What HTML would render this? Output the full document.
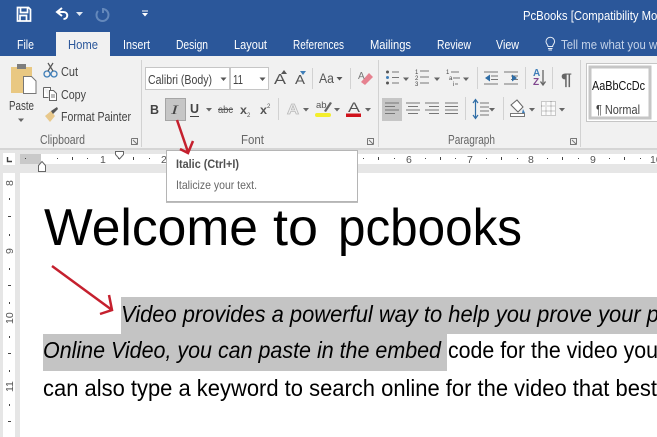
<!DOCTYPE html>
<html><head><meta charset="utf-8"><style>
html,body{margin:0;padding:0;background:#fff;overflow:hidden;width:657px;height:437px}
svg{display:block}
text{font-family:"Liberation Sans",sans-serif}
.t{fill:#fff;font-size:13px}
.r{fill:#444;font-size:13px}
.g{fill:#666;font-size:12.5px}
.n{fill:#555;font-size:10.5px}
</style></head><body>
<svg width="657" height="437" viewBox="0 0 657 437" xmlns="http://www.w3.org/2000/svg">
<rect width="657" height="437" fill="#fff"/>
<!-- title bar -->
<rect width="657" height="56" fill="#2b579a"/>
<rect x="56" y="32" width="54" height="24" fill="#f1f1f1"/>
<path d="M17.500 7.500h11l2 2v11.500h-13zM20.500 8v4.500h7V8M20 21v-5.500h6.500V21" fill="none" stroke="#fff" stroke-width="1.700"/>
<path d="M62 8l-5 4 5 4M57.500 12h6c5 0 5 7 0 7" fill="none" stroke="#fff" stroke-width="2"/>
<path d="M76 12h7l-3.500 4z" fill="#dfe7f2"/>
<path d="M102 9a6 6 0 1 1-4 2M103 8v5" fill="none" stroke="#6488bb" stroke-width="2"/>
<path d="M142 10.500h6v1h-6zM142 13h6l-3 3.500z" fill="#fff"/>
<text class="t" x="523" y="20" textLength="150" lengthAdjust="spacingAndGlyphs">PcBooks [Compatibility Mode]</text>
<text class="t" x="17" y="49" textLength="17" lengthAdjust="spacingAndGlyphs">File</text>
<text class="t" x="68" y="49" textLength="30" lengthAdjust="spacingAndGlyphs" style="fill:#2b579a">Home</text>
<text class="t" x="123" y="49" textLength="27" lengthAdjust="spacingAndGlyphs">Insert</text>
<text class="t" x="176" y="49" textLength="32" lengthAdjust="spacingAndGlyphs">Design</text>
<text class="t" x="234" y="49" textLength="33" lengthAdjust="spacingAndGlyphs">Layout</text>
<text class="t" x="293" y="49" textLength="51" lengthAdjust="spacingAndGlyphs">References</text>
<text class="t" x="370" y="49" textLength="41" lengthAdjust="spacingAndGlyphs">Mailings</text>
<text class="t" x="437" y="49" textLength="34" lengthAdjust="spacingAndGlyphs">Review</text>
<text class="t" x="496" y="49" textLength="23" lengthAdjust="spacingAndGlyphs">View</text>
<text class="t" x="561" y="49" textLength="112" lengthAdjust="spacingAndGlyphs" style="fill:#c3d2e8">Tell me what you want</text>
<path d="M548.500 50h3.500M548 48.500h4.500M548 46.500c0-2-2-2.500-2-5a4.300 4.300 0 0 1 8.600 0c0 2.500-2 3-2 5z" fill="none" stroke="#e4ebf5" stroke-width="1"/>
<!-- ribbon -->
<rect y="56" width="657" height="93" fill="#f1f1f1"/>
<rect y="148" width="657" height="2" fill="#d5d5d5"/>
<path d="M141.500 60v87M378.500 60v87M580.500 60v87" stroke="#d2d2d2"/>
<!-- clipboard -->
<rect x="11" y="67" width="21" height="26" fill="#e9c882"/>
<rect x="17" y="64" width="9" height="5" fill="#7d7d7d"/>
<path d="M23.500 76.500h8l4.500 4.500v12.500h-12.500z" fill="#fff" stroke="#777"/>
<text class="r" x="9" y="110" textLength="25" lengthAdjust="spacingAndGlyphs">Paste</text>
<path d="M18 118.500h6l-3 3.500z" fill="#666"/>
<circle cx="47" cy="74" r="3" fill="none" stroke="#3f7eb8" stroke-width="1.300"/><circle cx="54" cy="74" r="3" fill="none" stroke="#3f7eb8" stroke-width="1.300"/>
<path d="M48 71l5-8M53 71l-5-8" stroke="#555" stroke-width="1.200"/>
<text class="r" x="61" y="76" textLength="17" lengthAdjust="spacingAndGlyphs">Cut</text>
<path d="M43.500 87.500h7l0 3M43.500 87.500v10h5" fill="#fff" stroke="#666"/>
<path d="M49.500 90.500h4l3 3v7h-7z" fill="#fff" stroke="#666"/>
<path d="M51 95h4M51 97h4" stroke="#777"/>
<text class="r" x="61" y="99" textLength="25" lengthAdjust="spacingAndGlyphs">Copy</text>
<path d="M45 116l6-5 4 5-5 6z" fill="#e8c88b"/>
<path d="M51 111l6-4 1 2-5 5z" fill="#555"/>
<text class="r" x="61" y="121" textLength="70" lengthAdjust="spacingAndGlyphs">Format Painter</text>
<text class="g" x="40" y="144" textLength="45" lengthAdjust="spacingAndGlyphs">Clipboard</text>
<path d="M131.500 138.500h6v6M131.500 138.500v6h6M133 140l4 4" fill="none" stroke="#777"/>
<!-- font -->
<rect x="145.500" y="67.500" width="84" height="22" fill="#fff" stroke="#c6c6c6"/>
<rect x="230.500" y="67.500" width="38" height="22" fill="#fff" stroke="#c6c6c6"/>
<text class="r" x="148" y="84" textLength="64" lengthAdjust="spacingAndGlyphs">Calibri (Body)</text>
<text class="r" x="233" y="84" textLength="10" lengthAdjust="spacingAndGlyphs">11</text>
<path d="M220.500 77.500h6l-3 3.500zM259.500 77.500h6l-3 3.500z" fill="#555"/>
<text x="274" y="84" font-size="15" fill="#555" textLength="12" lengthAdjust="spacingAndGlyphs">A</text>
<path d="M281 74l3-4 3 4z" fill="#555"/>
<text x="295" y="84" font-size="12.500" fill="#555" textLength="10" lengthAdjust="spacingAndGlyphs">A</text>
<path d="M300 71h6l-3 4z" fill="#3f7eb8"/>
<path d="M312.500 68v21M350.500 68v21" stroke="#d2d2d2"/>
<text x="319" y="83" font-size="14" fill="#555" textLength="15" lengthAdjust="spacingAndGlyphs">Aa</text>
<path d="M336.500 77h6l-3 3.500z" fill="#555"/>
<path d="M361 82l8-9 4 4-8 8z" fill="#e6818f"/>
<text x="358" y="79" font-size="10" fill="#777">A</text>
<rect x="165.500" y="98.500" width="20" height="22" fill="#c6c6c6" stroke="#a5a5a5"/>
<text x="150" y="114" font-size="12.500" font-weight="bold" fill="#444" textLength="9" lengthAdjust="spacingAndGlyphs">B</text>
<text x="171" y="114" font-size="13" font-style="italic" style="font-family:'Liberation Serif',serif" fill="#444" textLength="7" lengthAdjust="spacingAndGlyphs">I</text>
<text x="190" y="113" font-size="12.500" font-weight="bold" fill="#444" textLength="9" lengthAdjust="spacingAndGlyphs">U</text>
<path d="M190 116.500h9" stroke="#444"/>
<path d="M206 108h6l-3 3.500zM303 108h6l-3 3.500zM334 108h6l-3 3.500zM365 108h6l-3 3.500z" fill="#666"/>
<text x="218" y="113" font-size="10.500" fill="#555" textLength="15" lengthAdjust="spacingAndGlyphs">abc</text>
<path d="M218 109.500h15" stroke="#555"/>
<text x="240" y="114" font-size="12" font-weight="bold" fill="#555" textLength="7" lengthAdjust="spacingAndGlyphs">x</text>
<text x="247" y="117" font-size="6" fill="#555">2</text>
<text x="260" y="114" font-size="12" font-weight="bold" fill="#555" textLength="7" lengthAdjust="spacingAndGlyphs">x</text>
<text x="267" y="108" font-size="6" fill="#555">2</text>
<path d="M278.500 98v22" stroke="#d2d2d2"/>
<text x="287" y="114" font-size="15" font-weight="bold" fill="#f1f1f1" stroke="#bbb" stroke-width=".8" textLength="12" lengthAdjust="spacingAndGlyphs">A</text>
<text x="316" y="108" font-size="9.500" fill="#555">ab</text>
<path d="M324 111l6-9 2 1-6 9z" fill="#666"/>
<rect x="315" y="113" width="16" height="4" rx="2" fill="#f3ee2c"/>
<text x="348" y="112" font-size="14" fill="#555" textLength="12" lengthAdjust="spacingAndGlyphs">A</text>
<rect x="346" y="113.500" width="15" height="3.500" fill="#d0121b"/>
<text class="g" x="241" y="144" textLength="23" lengthAdjust="spacingAndGlyphs">Font</text>
<path d="M367.500 138.500h6v6M367.500 138.500v6h6M369 140l4 4" fill="none" stroke="#777"/>
<!-- paragraph -->
<path d="M392 72h7M392 77.500h7M392 83h7M420 71h9M420 77h9M420 83h9M451 72h8M453 78h7M455 84h3M484 72h14M491 76h7M491 79.500h7M484 84h14M504 72h14M511 76h7M511 79.500h7M504 84h14" stroke="#777"/>
<circle cx="387.500" cy="72" r="1.500" fill="#555"/><circle cx="387.500" cy="77.500" r="1.500" fill="#3f7eb8"/><circle cx="387.500" cy="83" r="1.500" fill="#555"/>
<text x="415" y="74" font-size="6" fill="#444">1</text><text x="415" y="80" font-size="6" fill="#444">2</text><text x="415" y="86" font-size="6" fill="#444">3</text>
<text x="446" y="74" font-size="6" fill="#444">1</text><text x="449" y="80" font-size="6" fill="#444">a</text><text x="453" y="86" font-size="6" fill="#444">i</text>
<path d="M403 77.500h6l-3 3.500zM434 77.500h6l-3 3.500zM463 77.500h6l-3 3.500z" fill="#666"/>
<path d="M490 74.500l-5 3.500 5 3.500zM512 74.500l5 3.500-5 3.500z" fill="#2f6da6"/>
<path d="M477.500 67v22M525.500 67v22M552.500 67v22" stroke="#d2d2d2"/>
<text x="533" y="76" font-size="10" font-weight="bold" fill="#3f7eb8">A</text>
<text x="533" y="85" font-size="10" font-weight="bold" fill="#80468e">Z</text>
<path d="M543 70v14M540.500 81.500l2.500 3.500 2.500-3.500" fill="none" stroke="#666" stroke-width="1.300"/>
<text x="561" y="85" font-size="17" font-weight="bold" fill="#666" textLength="11" lengthAdjust="spacingAndGlyphs">¶</text>
<rect x="382" y="98" width="20" height="23" fill="#c6c6c6"/>
<path d="M385 103h14M385 106.500h10M385 110h14M385 113.500h10M406 103h14M408 106.500h10M406 110h14M408 113.500h10M425 103h14M429 106.500h10M425 110h14M429 113.500h10M445 103h13M445 106.500h13M445 110h13M445 113.500h13M480 103h9M480 107h9M480 111h9M480 115h9" stroke="#777"/>
<path d="M475.500 100v18M473 103l2.500-3.500 2.500 3.500M473 115l2.500 3.500 2.500-3.500" fill="none" stroke="#2f6da6" stroke-width="1.200"/>
<path d="M489 108h6l-3 3.500zM529 108h6l-3 3.500zM559 108h6l-3 3.500z" fill="#666"/>
<path d="M465.500 97v23M503.500 97v23" stroke="#d2d2d2"/>
<path d="M511 105l6-5 6 7-5 5z" fill="#fff" stroke="#666"/>
<path d="M523 109l2 4h-3z" fill="#3f7eb8"/>
<rect x="510.500" y="113.500" width="14" height="3" fill="#fff" stroke="#777"/>
<path d="M541.500 101.500h14v14h-14zM546 101.500v14M551 101.500v14M541.500 106h14M541.500 111h14" fill="#fbfbfb" stroke="#999" stroke-dasharray="1 1"/>
<text class="g" x="448" y="144" textLength="47" lengthAdjust="spacingAndGlyphs">Paragraph</text>
<path d="M570.500 138.500h6v6M570.500 138.500v6h6M572 140l4 4" fill="none" stroke="#777"/>
<!-- styles -->
<rect x="586.500" y="63.500" width="75" height="58" fill="#fff" stroke="#c6c6c6"/>
<rect x="590" y="67" width="60" height="51" fill="#fff" stroke="#c6c6c6" stroke-width="3"/>
<text x="592" y="90" font-size="12.500" fill="#111" textLength="53" lengthAdjust="spacingAndGlyphs">AaBbCcDc</text>
<text x="596" y="114" font-size="12.500" fill="#444" textLength="44" lengthAdjust="spacingAndGlyphs">¶ Normal</text>
<!-- ruler band -->
<rect y="150" width="657" height="23" fill="#e6e6e6"/>
<rect x="3" y="153" width="12" height="12" fill="#fff"/>
<path d="M7.500 157v4.500H12" fill="none" stroke="#444" stroke-width="1.400"/>
<rect x="20" y="154" width="637" height="10" fill="#fff"/>
<rect x="20" y="154" width="21" height="10" fill="#c9c9c9"/>
<g fill="#444">
<path d="M25 158h1v1h-1zM57 158h1v1h-1zM87 158h1v1h-1zM118 158h1v1h-1zM149 158h1v1h-1zM180 158h1v1h-1zM363 158h1v1h-1zM394 158h1v1h-1zM425 158h1v1h-1zM455 158h1v1h-1zM486 158h1v1h-1zM517 158h1v1h-1zM547 158h1v1h-1zM578 158h1v1h-1zM609 158h1v1h-1zM640 158h1v1h-1z"/>
<path d="M72 157h1v3h-1zM133 157h1v3h-1zM378 157h1v3h-1zM440 157h1v3h-1zM501 157h1v3h-1zM562 157h1v3h-1zM624 157h1v3h-1z"/>
</g>
<text class="n" x="100" y="163">1</text><text class="n" x="161" y="163">2</text>
<text class="n" x="406" y="163">6</text><text class="n" x="467" y="163">7</text><text class="n" x="528" y="163">8</text><text class="n" x="590" y="163">9</text><text class="n" x="650" y="163">10</text>
<path d="M38.500 165.500l3.500-4 3.500 4v6h-7z" fill="#fff" stroke="#666"/>
<path d="M115.500 151.500h8v3l-4 4.500-4-4.500z" fill="#fff" stroke="#666"/>
<!-- left ruler -->
<rect y="173" width="20" height="264" fill="#e6e6e6"/>
<rect x="3" y="173" width="12" height="264" fill="#fff"/>
<path d="M9.500 198v2M9.500 234v2M9.500 268v2M9.500 302v2M9.500 336v2M9.500 370v2M9.500 404v2" stroke="#444"/>
<path d="M8 216.500h3M8 285.500h3M8 353.500h3M8 421.500h3" stroke="#444"/>
<text class="n" transform="translate(13,186) rotate(-90)">8</text>
<text class="n" transform="translate(13,254) rotate(-90)">9</text>
<text class="n" transform="translate(13,324) rotate(-90)">10</text>
<text class="n" transform="translate(13,392) rotate(-90)">11</text>
<!-- doc -->
<text x="44" y="245" font-size="52" fill="#000" textLength="214" lengthAdjust="spacingAndGlyphs">Welcome</text>
<text x="273" y="245" font-size="52" fill="#000" textLength="45" lengthAdjust="spacingAndGlyphs">to</text>
<text x="338" y="245" font-size="52" fill="#000" textLength="184" lengthAdjust="spacingAndGlyphs">pcbooks</text>
<rect x="121" y="297" width="536" height="37" fill="#c4c4c4"/>
<rect x="43" y="334" width="404" height="37" fill="#c4c4c4"/>
<text x="121" y="322" font-size="23" font-style="italic" fill="#000" textLength="538" lengthAdjust="spacingAndGlyphs">Video provides a powerful way to help you prove your p</text>
<text x="43" y="358" font-size="23" font-style="italic" fill="#000" textLength="398" lengthAdjust="spacingAndGlyphs">Online Video, you can paste in the embed</text>
<text x="448" y="358" font-size="23" fill="#000" textLength="210" lengthAdjust="spacingAndGlyphs">code for the video you</text>
<text x="43" y="396" font-size="23" fill="#000" textLength="614" lengthAdjust="spacingAndGlyphs">can also type a keyword to search online for the video that best</text>
<!-- tooltip -->
<rect x="166" y="150" width="192" height="53" fill="#bdbdbd"/>
<rect x="166.500" y="150.500" width="191" height="51" fill="#fff" stroke="#b5b5b5"/>
<text x="176" y="168" font-size="12" font-weight="bold" fill="#505050" textLength="63" lengthAdjust="spacingAndGlyphs">Italic (Ctrl+I)</text>
<text x="176" y="189" font-size="12" fill="#666" textLength="81" lengthAdjust="spacingAndGlyphs">Italicize your text.</text>
<!-- arrows -->
<path d="M177 120l11 32M180 149l8 4 5-12" fill="none" stroke="#c5202e" stroke-width="2.500"/>
<path d="M52 266l60 44M100 314l12-4-3-15" fill="none" stroke="#c5202e" stroke-width="2.500"/>
</svg>
</body></html>
